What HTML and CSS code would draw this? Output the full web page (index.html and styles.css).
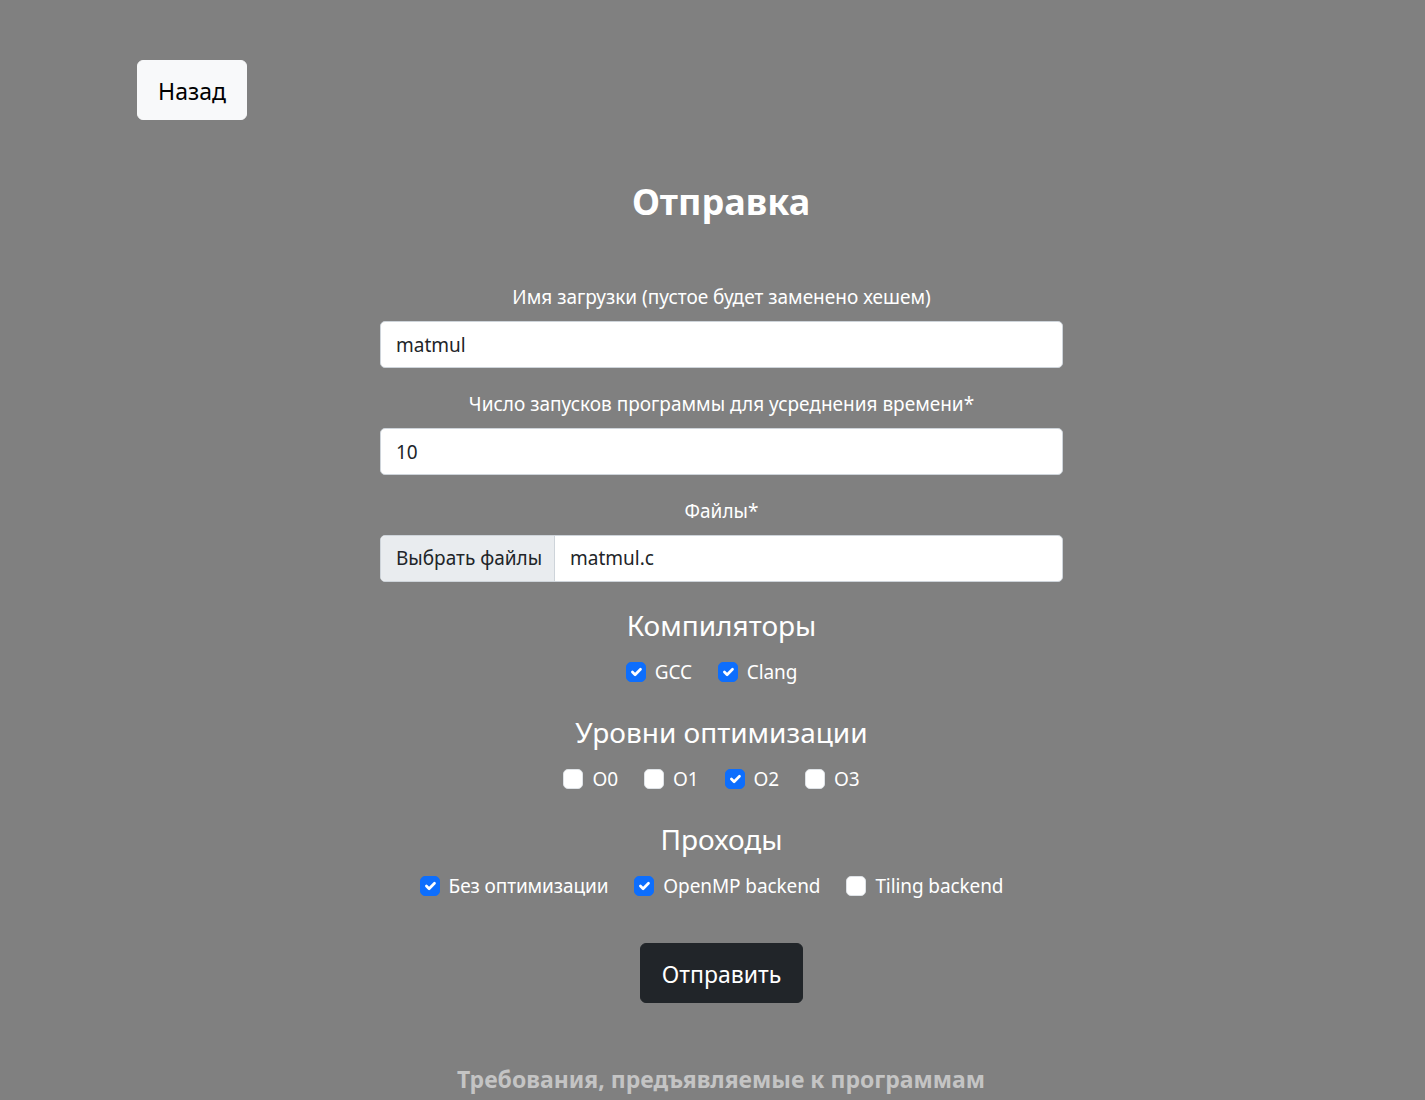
FILE: index.html
```html
<!DOCTYPE html>
<html lang="ru">
<head>
<meta charset="utf-8">
<title>Отправка</title>
<link rel="stylesheet" href="styles.css">
</head>
<body>
<div class="page">
  <div class="top">
    <button class="btn btn-light">Назад</button>
  </div>
  <h2 class="title">Отправка</h2>
  <form class="form">
    <label class="form-label">Имя загрузки (пустое будет заменено хешем)</label>
    <input class="form-control" type="text" value="matmul">
    <label class="form-label mt">Число запусков программы для усреднения времени*</label>
    <input class="form-control" type="text" value="10">
    <label class="form-label mt">Файлы*</label>
    <div class="file-input">
      <span class="file-btn">Выбрать файлы</span>
      <span class="file-name">matmul.c</span>
    </div>

    <h4 class="section first">Компиляторы</h4>
    <div class="checks">
      <label class="check"><span class="box on"><svg viewBox="0 0 20 20"><path d="M6 10l3 3l6-6"/></svg></span>GCC</label>
      <label class="check"><span class="box on"><svg viewBox="0 0 20 20"><path d="M6 10l3 3l6-6"/></svg></span>Clang</label>
    </div>

    <h4 class="section">Уровни оптимизации</h4>
    <div class="checks">
      <label class="check"><span class="box"></span>O0</label>
      <label class="check"><span class="box"></span>O1</label>
      <label class="check"><span class="box on"><svg viewBox="0 0 20 20"><path d="M6 10l3 3l6-6"/></svg></span>O2</label>
      <label class="check"><span class="box"></span>O3</label>
    </div>

    <h4 class="section">Проходы</h4>
    <div class="checks">
      <label class="check"><span class="box on"><svg viewBox="0 0 20 20"><path d="M6 10l3 3l6-6"/></svg></span>Без оптимизации</label>
      <label class="check"><span class="box on"><svg viewBox="0 0 20 20"><path d="M6 10l3 3l6-6"/></svg></span>OpenMP backend</label>
      <label class="check"><span class="box"></span>Tiling backend</label>
    </div>

    <div class="submit-row">
      <button type="button" class="btn btn-dark">Отправить</button>
    </div>
  </form>
  <h5 class="req">Требования, предъявляемые к программам</h5>
</div>
</body>
</html>
```

FILE: styles.css
```css
* { box-sizing: border-box; }
html, body { margin: 0; padding: 0; }
body {
  background: #808080;
  font-family: "Noto Sans", "Open Sans", sans-serif;
  font-size: 20px;
  line-height: 1.5;
  color: #fff;
  height: 1100px;
  overflow: hidden;
}
.page {
  padding-top: 60px;
}
.top {
  padding-left: 137px;
}
.btn {
  font-family: inherit;
  font-size: 23px;
  line-height: 37.5px;
  border: 1.25px solid transparent;
  border-radius: 6px;
  cursor: pointer;
  height: 60px;
  padding: 3px 0 0;
}
.btn-light {
  background: #f8f9fa;
  border-color: #f8f9fa;
  color: #000;
  width: 110px;
}
.btn-dark {
  background: #212529;
  border-color: #212529;
  color: #fff;
  width: 163px;
}
.title {
  margin: 58px 0 0;
  text-align: center;
  font-size: 36px;
  font-weight: 700;
  line-height: 48px;
  padding-left: 17px;
}
.form {
  width: 683px;
  margin: 56px 0 0 380px;
  display: flex;
  flex-direction: column;
  align-items: stretch;
}
.form-label {
  display: block;
  text-align: center;
  font-size: 19px;
  line-height: 30px;
  margin-bottom: 9px;
}
.form-label.mt { margin-top: 21px; }
.form-control {
  display: block;
  width: 100%;
  height: 47px;
  padding: 0 15px;
  font-family: inherit;
  font-size: 19px;
  color: #212529;
  background: #fff;
  border: 1px solid #ced4da;
  border-radius: 5px;
  outline: none;
}
.file-input {
  display: flex;
  height: 47px;
  background: #fff;
  border: 1px solid #ced4da;
  border-radius: 5px;
  overflow: hidden;
  color: #212529;
  font-size: 19px;
}
.file-btn {
  display: flex;
  align-items: center;
  width: 174px;
  padding-left: 15px;
  background: #e9ecef;
  border-right: 1px solid #ced4da;
}
.file-name {
  display: flex;
  align-items: center;
  padding-left: 15px;
}
.section {
  margin: 27px 0 0;
  text-align: center;
  font-weight: 400;
  font-size: 28px;
  line-height: 36px;
}
.section.first { margin-top: 25px; }
.checks {
  display: flex;
  justify-content: center;
  gap: 26px;
  margin-top: 14px;
  padding-right: 20px;
  font-size: 19px;
  line-height: 30px;
}
.check {
  display: flex;
  align-items: center;
  gap: 9px;
  letter-spacing: -0.1px;
}
.box {
  width: 20px;
  height: 20px;
  border-radius: 5px;
  background: #fff;
  border: 1px solid #dee2e6;
  display: flex;
  align-items: center;
  justify-content: center;
}
.box.on {
  background: #0d6efd;
  border-color: #0d6efd;
}
.box svg {
  width: 20px;
  height: 20px;
  fill: none;
  stroke: #fff;
  stroke-width: 3;
  stroke-linecap: round;
  stroke-linejoin: round;
}
.submit-row {
  display: flex;
  justify-content: center;
  margin-top: 42px;
}
.req {
  margin: 61px 0 0;
  text-align: center;
  font-size: 23px;
  line-height: 30px;
  font-weight: 700;
  color: #c4c4c4;
  padding-left: 17px;
}
```
